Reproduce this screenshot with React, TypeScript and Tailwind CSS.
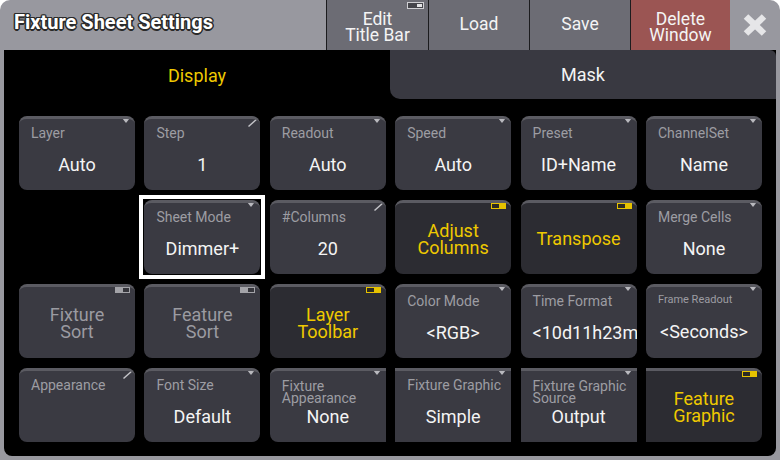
import React from "react";

type SetCell = {
  t: "set";
  label: string;
  value?: string;
  ind: "tri" | "pen";
  small?: boolean;
  two?: boolean;
  sel?: boolean;
  clip?: boolean;
  r?: string;
};
type TogCell = { t: "tog"; text: string[]; on: boolean; r?: string };
type EmptyCell = { t: "empty" };
type Cell = SetCell | TogCell | EmptyCell;

const cells: Cell[] = [
  { t: "set", label: "Layer", value: "Auto", ind: "tri" },
  { t: "set", label: "Step", value: "1", ind: "pen" },
  { t: "set", label: "Readout", value: "Auto", ind: "tri" },
  { t: "set", label: "Speed", value: "Auto", ind: "tri" },
  { t: "set", label: "Preset", value: "ID+Name", ind: "tri" },
  { t: "set", label: "ChannelSet", value: "Name", ind: "tri" },

  { t: "empty" },
  { t: "set", label: "Sheet Mode", value: "Dimmer+", ind: "tri", sel: true },
  { t: "set", label: "#Columns", value: "20", ind: "pen" },
  { t: "tog", text: ["Adjust", "Columns"], on: true },
  { t: "tog", text: ["Transpose"], on: true },
  { t: "set", label: "Merge Cells", value: "None", ind: "tri" },

  { t: "tog", text: ["Fixture", "Sort"], on: false },
  { t: "tog", text: ["Feature", "Sort"], on: false },
  { t: "tog", text: ["Layer", "Toolbar"], on: true },
  { t: "set", label: "Color Mode", value: "<RGB>", ind: "tri" },
  { t: "set", label: "Time Format", value: "<10d11h23m45s>", ind: "tri", clip: true },
  { t: "set", label: "Frame Readout", value: "<Seconds>", ind: "tri", small: true },

  { t: "set", label: "Appearance", ind: "pen" },
  { t: "set", label: "Font Size", value: "Default", ind: "tri" },
  { t: "set", label: "Fixture Appearance", value: "None", ind: "tri", two: true, r: "rounded-l-[8px]" },
  { t: "set", label: "Fixture Graphic", value: "Simple", ind: "tri", r: "rounded-none" },
  { t: "set", label: "Fixture Graphic Source", value: "Output", ind: "tri", two: true, r: "rounded-none" },
  { t: "tog", text: ["Feature", "Graphic"], on: true, r: "rounded-r-[8px]" },
];

function Triangle() {
  return (
    <svg className="absolute top-[-1px] right-[5px]" width="8" height="5" viewBox="0 0 8 5">
      <polygon points="0,0 8,0 4,5" fill="#b9b9be" />
    </svg>
  );
}

function Pencil() {
  return (
    <svg className="absolute top-[-1px] right-[2px]" width="10" height="9" viewBox="0 0 10 9">
      <line x1="0.5" y1="8.5" x2="9.5" y2="0.5" stroke="#c4c4c8" strokeWidth="1.4" />
    </svg>
  );
}

function ToggleInd({ on }: { on: boolean }) {
  if (on) {
    return (
      <div className="absolute top-0 right-[5px] w-[15px] h-[6px] bg-[#e6c200] p-[1px] flex">
        <div className="w-[7px] h-full bg-[#2b2a22]" />
      </div>
    );
  }
  return (
    <div className="absolute top-0 right-[5px] w-[15px] h-[6px] bg-[#a3a3a8] p-[1px] flex justify-end">
      <div className="w-[6px] h-full bg-[#36363c]" />
    </div>
  );
}

function CellView({ c }: { c: Cell }) {
  if (c.t === "empty") return <div />;
  if (c.t === "tog") {
    return (
      <div
        className={`relative h-[74px] border-t-[3px] border-[#5b5b62] flex items-center justify-center text-center text-[18px] leading-[16.5px] ${
          c.r ?? "rounded-[8px]"
        } ${c.on ? "bg-[#2c2c32] text-[#efc900]" : "bg-[#3a3a42] text-[#9b9ba1]"}`}
      >
        <ToggleInd on={c.on} />
        <div className="pt-[2px]">
          {c.text.map((l) => (
            <div key={l}>{l}</div>
          ))}
        </div>
      </div>
    );
  }
  return (
    <div className="relative">
      {c.sel && <div className="absolute -inset-[5px] border-[4px] border-white pointer-events-none" />}
      <div
        className={`relative h-[74px] bg-[#3a3a42] border-t-[3px] border-[#5b5b62] flex flex-col pt-[6px] pl-[12px] pr-[8px] overflow-hidden ${
          c.r ?? "rounded-[8px]"
        }`}
      >
        {c.ind === "tri" ? <Triangle /> : <Pencil />}
        <div
          className={`h-[30px] text-[#9d9da3] whitespace-nowrap ${
            c.two
              ? "text-[14px] leading-[12.6px] pt-[2.5px] whitespace-normal"
              : c.small
              ? "text-[11px] leading-[16px] -mt-[1px]"
              : "text-[14px] leading-[16px]"
          }`}
        >
          {c.two ? (
            <>
              {c.label.split(" ").slice(0, c.label.split(" ").length - 1).join(" ")}
              <br />
              {c.label.split(" ").slice(-1)[0]}
            </>
          ) : (
            c.label
          )}
        </div>
        {c.value && (
          <div
            className={`text-[18px] leading-[20px] text-[#f4f4f4] whitespace-nowrap ${
              c.clip ? "text-left -mr-[8px]" : "text-center -ml-[12px] -mr-[8px]"
            }`}
          >
            {c.value}
          </div>
        )}
      </div>
    </div>
  );
}

export default function App() {
  return (
    <div className="w-[780px] h-[460px] bg-[#98989f] rounded-t-[10px] overflow-hidden flex flex-col font-['Roboto',sans-serif]">
      {/* title bar */}
      <div className="h-[50px] flex shrink-0">
        <div className="w-[326px] pl-[14px] pt-[10px] text-[20px] leading-[24px] font-bold text-white [text-shadow:1px_1px_0_#2a2a2a,-1px_-1px_0_#2a2a2a,1px_-1px_0_#2a2a2a,-1px_1px_0_#2a2a2a,0_1.5px_0_#2a2a2a,0_-1.5px_0_#2a2a2a,1.5px_0_0_#2a2a2a,-1.5px_0_0_#2a2a2a]">
          Fixture Sheet Settings
        </div>
        <div className="relative w-[102px] border-l border-[#1c1c1e] bg-[#6c6c74] flex items-center justify-center text-center text-[17.5px] leading-[16.5px] text-[#f4f4f4]">
          <div className="absolute top-[2px] right-[4px] w-[17px] h-[7px] border border-[#cfcfd3] bg-[#45454b] flex justify-end p-[1px]">
            <div className="w-[5px] h-full bg-[#e4e4e6]" />
          </div>
          <div className="pt-[4px]">
            <div>Edit</div>
            <div>Title Bar</div>
          </div>
        </div>
        <div className="w-[101px] border-l border-[#1c1c1e] bg-[#6c6c74] flex items-center justify-center text-[17.5px] text-[#f4f4f4] pb-[2px]">
          Load
        </div>
        <div className="w-[101px] border-l border-[#1c1c1e] bg-[#6c6c74] flex items-center justify-center text-[17.5px] text-[#f4f4f4] pb-[2px]">
          Save
        </div>
        <div className="w-[100px] border-l border-[#1c1c1e] bg-[#9b5553] flex items-center justify-center text-center text-[17.5px] leading-[16.5px] text-[#f4f4f4]">
          <div className="pt-[4px]">
            <div>Delete</div>
            <div>Window</div>
          </div>
        </div>
        <div className="w-[50px] flex items-center justify-center">
          <svg width="24" height="22" viewBox="0 0 24 22">
            <line x1="3" y1="2.5" x2="21" y2="19.5" stroke="#e6e6e8" strokeWidth="6.5" />
            <line x1="21" y1="2.5" x2="3" y2="19.5" stroke="#e6e6e8" strokeWidth="6.5" />
          </svg>
        </div>
      </div>

      {/* content */}
      <div className="flex-1 mx-[4px] mb-[4px] bg-black rounded-b-[8px] flex flex-col">
        <div className="h-[50px] flex shrink-0">
          <div className="w-[386px] flex items-center justify-center text-[18px] text-[#efc900]">Display</div>
          <div className="flex-1 h-[49px] bg-[#393941] rounded-bl-[10px] rounded-tr-[6px] flex items-center justify-center text-[18px] text-[#f4f4f4]">
            Mask
          </div>
        </div>
        <div className="pt-[16px] pl-[15px] grid grid-cols-[repeat(6,116px)] grid-rows-[repeat(4,74px)] gap-x-[9.4px] gap-y-[10px]">
          {cells.map((c, i) => (
            <CellView key={i} c={c} />
          ))}
        </div>
      </div>
    </div>
  );
}
